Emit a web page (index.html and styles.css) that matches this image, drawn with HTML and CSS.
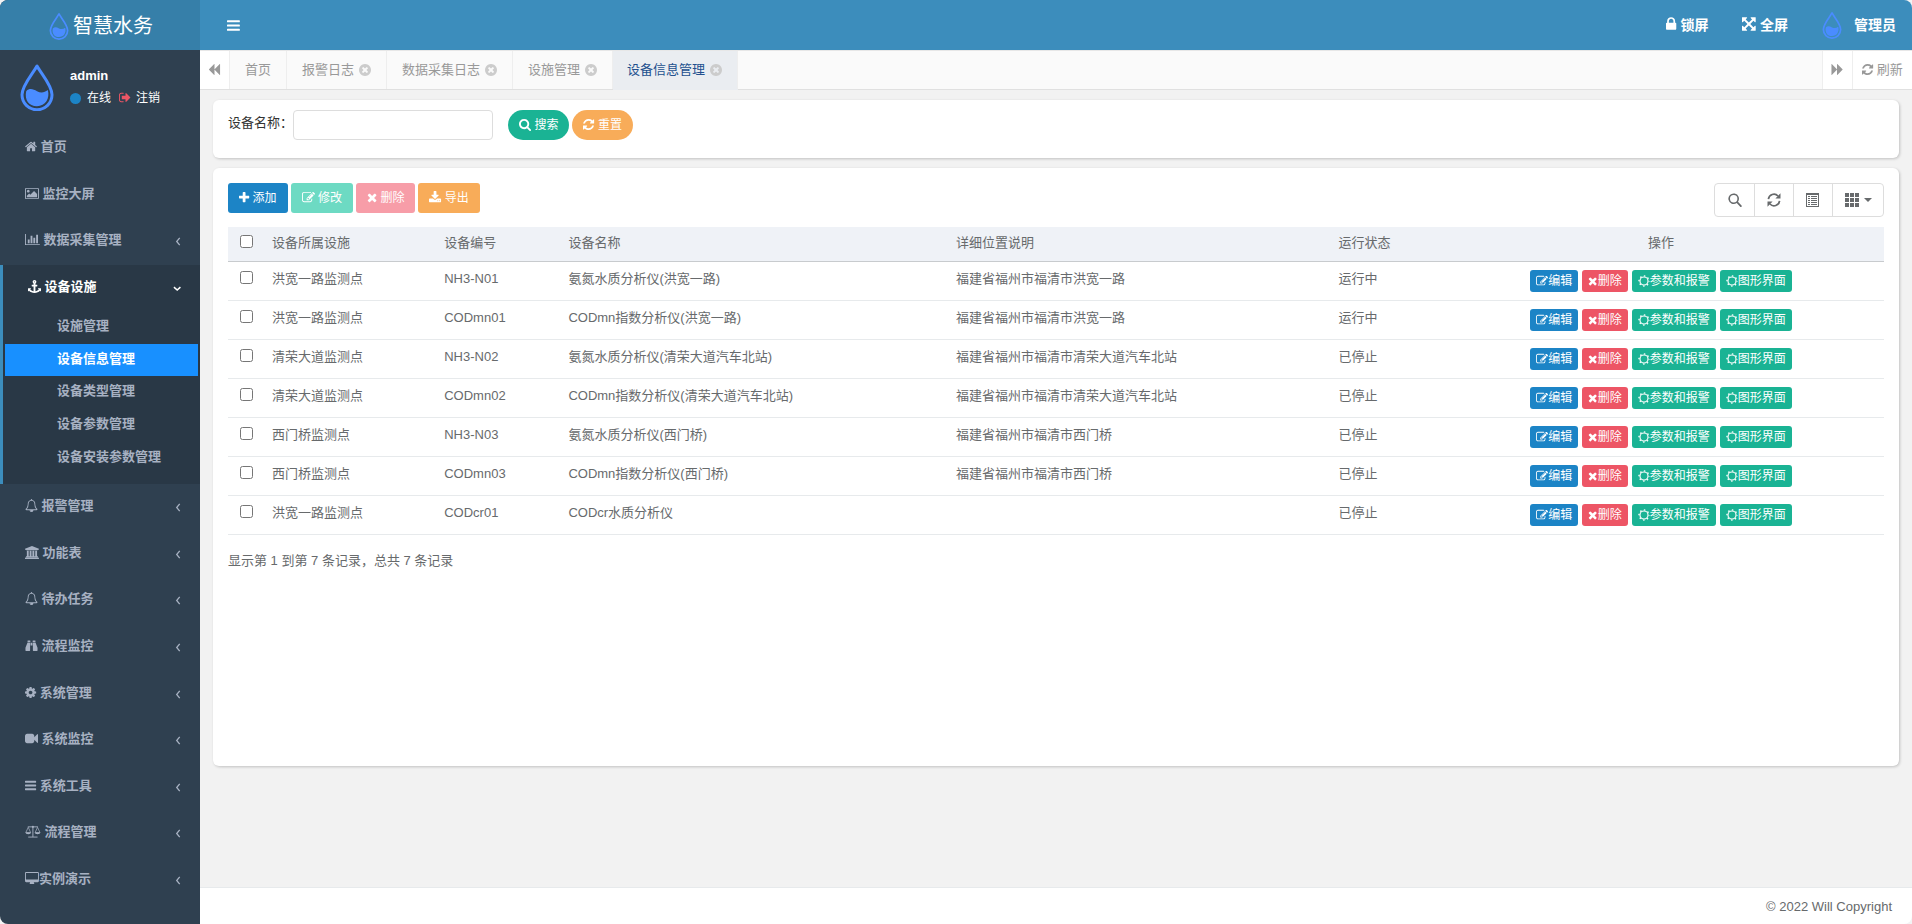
FILE: index.html
```html
<!DOCTYPE html>
<html lang="zh-CN">
<head>
<meta charset="utf-8">
<title>智慧水务</title>
<link rel="stylesheet" href="styles.css">
</head>
<body>
<svg class="sprite" aria-hidden="true">
<defs>
<g id="drop"><path d="M29 5C22 18 4 37 4 53a25 25 0 0 0 50 0C54 37 36 18 29 5z" fill="none" stroke="#4a8cff" stroke-width="5" stroke-linejoin="round"/><path d="M11 47c6-6 12-3 18 0s12 3 18-2c4 14-4 27-18 27S8 61 11 47z" fill="#4a8cff"/></g>
<path id="search" d="M1216 832q0-185-131.500-316.500t-316.500-131.500-316.500 131.500-131.500 316.500 131.500 316.500 316.500 131.500 316.500-131.500 131.500-316.500zm512 832q0 52-38 90t-90 38q-54 0-90-38l-343-342q-179 124-399 124-143 0-273.500-55.500t-225-150-150-225-55.500-273.500 55.500-273.500 150-225 225-150 273.500-55.500 273.500 55.500 225 150 150 225 55.500 273.500q0 220-124 399l343 343q37 37 37 90z"/>
<path id="refresh" d="M1639 1056q0 5-1 7-64 268-268 434.500t-478 166.500q-146 0-282.500-55t-243.500-157l-129 129q-19 19-45 19t-45-19-19-45v-448q0-26 19-45t45-19h448q26 0 45 19t19 45-19 45l-137 137q71 66 161 102t187 36q134 0 250-65t186-179q11-17 53-117 8-23 30-23h192q13 0 22.500 9.500t9.500 22.500zm25-800v448q0 26-19 45t-45 19h-448q-26 0-45-19t-19-45 19-45l138-138q-148-137-349-137-134 0-250 65t-186 179q-11 17-53 117-8 23-30 23h-199q-13 0-22.500-9.500t-9.500-22.500v-7q65-268 270-434.500t480-166.500q146 0 284 55.500t245 156.500l130-129q19-19 45-19t45 19 19 45z"/>
<path id="plus" d="M1600 736v192q0 40-28 68t-68 28h-416v416q0 40-28 68t-68 28h-192q-40 0-68-28t-28-68v-416h-416q-40 0-68-28t-28-68v-192q0-40 28-68t68-28h416v-416q0-40 28-68t68-28h192q40 0 68 28t28 68v416h416q40 0 68 28t28 68z"/>
<path id="times" d="M1490 1322q0 40-28 68l-136 136q-28 28-68 28t-68-28l-294-294-294 294q-28 28-68 28t-68-28l-136-136q-28-28-28-68t28-68l294-294-294-294q-28-28-28-68t28-68l136-136q28-28 68-28t68 28l294 294 294-294q28-28 68-28t68 28l136 136q28 28 28 68t-28 68l-294 294 294 294q28 28 28 68z"/>
<path id="edit" d="M888 1184l116-116-152-152-116 116v56h96v96h56zm440-720q-16-16-33 1l-350 350q-17 17-1 33t33-1l350-350q17-17 1-33zm80 594v190q0 119-84.500 203.500t-203.500 84.500h-832q-119 0-203.500-84.500t-84.500-203.500v-832q0-119 84.500-203.500t203.500-84.500h832q63 0 117 25 15 7 18 23 3 17-9 29l-49 49q-14 14-32 8-23-6-45-6h-832q-66 0-113 47t-47 113v832q0 66 47 113t113 47h832q66 0 113-47t47-113v-126q0-13 9-22l64-64q15-15 35-7t20 29zm-96-738l288 288-672 672h-288v-288zm444 132l-92 92-288-288 92-92q28-28 68-28t68 28l152 152q28 28 28 68t-28 68z"/>
<path id="download" d="M1344 1344q0-26-19-45t-45-19-45 19-19 45 19 45 45 19 45-19 19-45zm256 0q0-26-19-45t-45-19-45 19-19 45 19 45 45 19 45-19 19-45zm128-224v320q0 40-28 68t-68 28h-1472q-40 0-68-28t-28-68v-320q0-40 28-68t68-28h465l135 136q58 56 136 56t136-56l136-136h464q40 0 68 28t28 68zm-325-569q17 41-14 70l-448 448q-18 19-45 19t-45-19l-448-448q-31-29-14-70 17-39 59-39h256v-448q0-26 19-45t45-19h256q26 0 45 19t19 45v448h256q42 0 59 39z"/>
<path id="close" d="M1277 1122q0-26-19-45l-181-181 181-181q19-19 19-45 0-27-19-46l-90-90q-19-19-46-19-26 0-45 19l-181 181-181-181q-19-19-45-19-27 0-46 19l-90 90q-19 19-19 46 0 26 19 45l181 181-181 181q-19 19-19 45 0 27 19 46l90 90q19 19 46 19 26 0 45-19l181-181 181 181q19 19 45 19 27 0 46-19l90-90q19-19 19-46zm387-226q0 209-103 385.500t-279.500 279.500-385.500 103-385.500-103-279.500-279.500-103-385.500 103-385.500 279.500-279.500 385.500-103 385.500 103 279.500 279.500 103 385.500z"/>
<path id="lock" d="M640 768h512v-192q0-106-75-181t-181-75-181 75-75 181v192zm832 96v576q0 40-28 68t-68 28h-960q-40 0-68-28t-28-68v-576q0-40 28-68t68-28h32v-192q0-184 132-316t316-132 316 132 132 316v192h32q40 0 68 28t28 68z"/>
<path id="expand" d="M1411 541l-355 355 355 355 144-144q29-31 70-14 39 17 39 59v448q0 26-19 45t-45 19h-448q-42 0-59-40-17-39 14-69l144-144-355-355-355 355 144 144q31 30 14 69-17 40-59 40h-448q-26 0-45-19t-19-45v-448q0-42 40-59 39-17 69 14l144 144 355-355-355-355-144 144q-19 19-45 19-12 0-24-5-40-17-40-59v-448q0-26 19-45t45-19h448q42 0 59 40 17 39-14 69l-144 144 355 355 355-355-144-144q-31-30-14-69 17-40 59-40h448q26 0 45 19t19 45v448q0 42-39 59-13 5-25 5-26 0-45-19z"/>
<path id="bars" d="M192 1280h1408q64 0 64 64v128q0 64-64 64h-1408q-64 0-64-64v-128q0-64 64-64zM192 768h1408q64 0 64 64v128q0 64-64 64h-1408q-64 0-64-64v-128q0-64 64-64zM192 256h1408q64 0 64 64v128q0 64-64 64h-1408q-64 0-64-64v-128q0-64 64-64z"/>
<path id="home" d="M1472 992v480q0 26-19 45t-45 19h-384v-384h-256v384h-384q-26 0-45-19t-19-45v-480q0-1 1-6l575-474 575 474q1 2 1 6zm223-69l-62 74q-8 9-21 11h-3q-13 0-21-7l-692-577-692 577q-12 8-24 7-13-2-21-11l-62-74q-8-10-7-23.500t11-21.500l719-599q32-26 76-26t76 26l244 204v-195q0-14 9-23t23-9h192q14 0 23 9t9 23v408l219 182q10 8 11 21.500t-7 23.500z"/>
<path id="image" d="M576 576q0 80-56 136t-136 56-136-56-56-136 56-136 136-56 136 56 56 136zm1024 384v448h-1408v-192l320-320 160 160 512-512zm96-704h-1600q-13 0-22.500 9.500t-9.500 22.500v1216q0 13 9.500 22.500t22.500 9.500h1600q13 0 22.500-9.500t9.500-22.500v-1216q0-13-9.500-22.500t-22.500-9.500zm160 32v1216q0 66-47 113t-113 47h-1600q-66 0-113-47t-47-113v-1216q0-66 47-113t113-47h1600q66 0 113 47t47 113z"/>
<path id="chart" d="M640 896v512h-256v-512h256zm384-512v1024h-256v-1024h256zm1024 1152v128h-2048v-1536h128v1408h1920zm-640-896v768h-256v-768h256zm384-384v1152h-256v-1152h256z"/>
<path id="bell" d="M912 1696q0-16-16-16-59 0-101.500-42.500t-42.500-101.500q0-16-16-16t-16 16q0 73 51.500 124.500t124.500 51.500q16 0 16-16zm-666-288h1300q-266-300-266-832 0-51-24-105t-69-103-121.500-80.500-169.500-31.500-169.500 31.500-121.500 80.500-69 103-24 105q0 532-266 832zm1482 0q0 52-38 90t-90 38h-448q0 106-75 181t-181 75-181-75-75-181h-448q-52 0-90-38t-38-90q50-42 91-88t85-119.500 74.500-158.500 50-206 19.500-260q0-152 117-282.500t307-158.500q-8-19-8-39 0-40 28-68t68-28 68 28 28 68q0 20-8 39 190 28 307 158.500t117 282.500q0 139 19.500 260t50 206 74.500 158.500 85 119.500 91 88z"/>
<path id="bank" d="M960 0l960 384v128h-128q0 26-20.500 45t-48.500 19h-1526q-28 0-48.500-19t-20.500-45h-128v-128zm-704 640h256v768h128v-768h256v768h128v-768h256v768h128v-768h256v768h59q28 0 48.500 19t20.500 45v64h-1664v-64q0-26 20.500-45t48.500-19h59v-768zm1595 960q28 0 48.500 19t20.500 45v128h-1920v-128q0-26 20.500-45t48.500-19h1782z"/>
<path id="binoculars" d="M704 832v768q0 64-64 64h-512q-64 0-64-64v-384l270-704h306q64 0 64 64zM1024 512v384h-256v-384zM1728 1216v384q0 64-64 64h-512q-64 0-64-64v-1024q0-64 64-64h306zM736 224v224h-384v-224q0-32 32-32h320q32 0 32 32zM1440 224v224h-384v-224q0-32 32-32h320q32 0 32 32z"/>
<path id="cog" d="M1152 896q0-106-75-181t-181-75-181 75-75 181 75 181 181 75 181-75 75-181zm512-109v222q0 12-8 23t-20 13l-185 28q-19 54-39 91 35 50 107 138 10 12 10 25t-9 23q-27 37-99 108t-94 71q-12 0-26-9l-138-108q-44 23-91 38-16 136-29 186-7 28-36 28h-222q-14 0-24.500-8.500t-11.500-21.500l-28-184q-49-16-90-37l-141 107q-10 9-25 9-14 0-25-11-126-114-165-168-7-10-7-23 0-12 8-23 15-21 51-66.500t54-70.500q-27-50-41-99l-183-27q-13-2-21-12.500t-8-23.500v-222q0-12 8-23t19-13l186-28q14-46 39-92-40-57-107-138-10-12-10-24 0-10 9-23 26-36 98.500-107.500t94.500-71.500q13 0 26 10l138 107q44-23 91-38 16-136 29-186 7-28 36-28h222q14 0 24.500 8.500t11.500 21.500l28 184q49 16 90 37l142-107q9-9 24-9 13 0 25 10 129 119 165 170 7 8 7 22 0 12-8 23-15 21-51 66.500t-54 70.500q26 50 41 98l183 28q13 2 21 12.500t8 23.500z"/>
<path id="video" d="M1792 352v1088q0 42-39 59-13 5-25 5-27 0-45-19l-403-403v166q0 119-84.500 203.500t-203.500 84.500h-704q-119 0-203.500-84.500t-84.500-203.500v-704q0-119 84.500-203.500t203.500-84.500h704q119 0 203.500 84.500t84.500 203.500v165l403-402q18-19 45-19 12 0 25 5 39 17 39 59z"/>
<g id="scale"><path d="M1088 256v1408M448 1664h1280M384 256h1408" fill="none" stroke="currentColor" stroke-width="128"/><circle cx="1088" cy="256" r="144"/><path d="M448 320L112 1040h672L448 320zM1728 320l-336 720h672L1728 320z" fill="none" stroke="currentColor" stroke-width="100"/><path d="M48 1040h800q-40 240-400 240t-400-240zM1328 1040h800q-40 240-400 240t-400-240z"/></g>
<path id="desktop" d="M1728 992v-832q0-13-9.500-22.500t-22.500-9.500h-1600q-13 0-22.500 9.500t-9.500 22.500v832q0 13 9.500 22.500t22.500 9.500h1600q13 0 22.500-9.500t9.500-22.500zm128-832v1088q0 66-47 113t-113 47h-544q0 37 16 77.500t32 71 16 43.500q0 26-19 45t-45 19h-512q-26 0-45-19t-19-45q0-14 16-44t32-70 16-78h-544q-66 0-113-47t-47-113v-1088q0-66 47-113t113-47h1600q66 0 113 47t47 113z"/>
<path id="anchor" d="M960 256q0-26-19-45t-45-19-45 19-19 45 19 45 45 19 45-19 19-45zm832 928v352q0 22-20 30-8 2-12 2-12 0-23-9l-93-93q-119 143-318.500 226.500t-429.500 83.500-429.500-83.500-318.500-226.500l-93 93q-9 9-23 9-4 0-12-2-20-8-20-30v-352q0-14 9-23t23-9h352q22 0 30 20 8 19-7 35l-100 100q67 91 189.500 153.500t271.500 82.500v-647h-192q-26 0-45-19t-19-45v-128q0-26 19-45t45-19h192v-163q-58-34-93-92.500t-35-128.500q0-106 75-181t181-75 181 75 75 181q0 70-35 128.500t-93 92.500v163h192q26 0 45 19t19 45v128q0 26-19 45t-45 19h-192v647q149-20 271.500-82.500t189.500-153.500l-100-100q-15-16-7-35 8-20 30-20h352q14 0 23 9t9 23z"/>
<path id="signout" d="M704 1440q0 4 1 20t0 27-3 23-10 20-20 6h-320q-119 0-203.500-84.500t-84.500-203.500v-704q0-119 84.500-203.500t203.500-84.500h320q13 0 22.500 9.500t9.500 22.500q0 4 1 20t0 27-3 23-10 20-20 6h-320q-66 0-113 47t-47 113v704q0 66 47 113t113 47h312q40 0 40 32zm928-544q0 26-19 45l-544 544q-19 19-45 19t-45-19-19-45v-288h-448q-26 0-45-19t-19-45v-384q0-26 19-45t45-19h448v-288q0-26 19-45t45-19 45 19l544 544q19 19 19 45z"/>
<path id="backward" d="M1664 160v1472q0 50-45 19l-709-709q-10-10-14-20v710q0 50-45 19l-710-710q-38-45 0-90l710-710q45-31 45 19v710q4-10 14-20l709-709q45-31 45 19z"/>
<path id="forward" d="M128 160v1472q0 50 45 19l709-709q10-10 14-20v710q0 50 45 19l710-710q38-45 0-90l-710-710q-45-31-45 19v710q-4-10-14-20l-709-709q-45-31-45 19z"/>
<path id="left" d="M512 384L96 896l416 512" fill="none" stroke="currentColor" stroke-width="180"/>
<path id="down" d="M128 704l448 416 448-416" fill="none" stroke="currentColor" stroke-width="200"/>
<g id="sun" fill="none" stroke="currentColor"><circle cx="896" cy="896" r="600" stroke-width="170"/><circle cx="896" cy="896" r="750" stroke-width="190" stroke-dasharray="220 369" stroke-dashoffset="110"/></g>
<path id="zoom" d="M10 8.800a5.300 5.300 0 1 0-1.300 1.300l3.500 3.600a.9.900 0 0 0 1.300-1.300zM5.700 9.400a3.700 3.700 0 1 1 0-7.400 3.700 3.700 0 0 1 0 7.400z"/>
<g id="reload"><path d="M1.400 6.200A5.600 5.600 0 0 1 11 3M12.600 7.800A5.600 5.600 0 0 1 3 11" fill="none" stroke="currentColor" stroke-width="1.700"/><path d="M13.500.3V5.400H8.400zM.5 13.700V8.600h5.100z"/></g>
<path id="list" fill-rule="evenodd" d="M0 0h13v14H0zM1 2v11h11V2zM2 3h2v1H2zM5 3h6v1H5zM2 5h2v1H2zM5 5h6v1H5zM2 7h2v1H2zM5 7h6v1H5zM2 9h2v1H2zM5 9h6v1H5zM2 11h2v1H2zM5 11h6v1H5z"/>
<path id="grid" d="M0 0h4v4H0zM5 0h4v4H5zM10 0h4v4h-4zM0 5h4v4H0zM5 5h4v4H5zM10 5h4v4h-4zM0 10h4v4H0zM5 10h4v4H5zM10 10h4v4h-4z"/>
</defs>
</svg>
<div class="app">
  <aside class="sidebar">
    <a class="logo" href="#"><svg class="drop" viewBox="0 0 58 80"><use href="#drop"/></svg><span>智慧水务</span></a>
    <div class="user">
      <svg class="drop drop-lg" viewBox="0 0 58 80"><use href="#drop"/></svg>
      <div>
        <p class="user-name">admin</p>
        <p class="user-links"><i class="dot"></i><a href="#">在线</a><a href="#"><svg class="fa danger" viewBox="64 0 1664 1792"><use href="#signout"/></svg>注销</a></p>
      </div>
    </div>
    <nav>
      <ul class="menu">
        <li><a href="#"><svg class="fa" viewBox="64 0 1664 1792"><use href="#home"/></svg> 首页</a></li>
        <li><a href="#"><svg class="fa" viewBox="-64 0 1920 1792"><use href="#image"/></svg> 监控大屏</a></li>
        <li><a href="#"><svg class="fa" viewBox="0 0 2048 1792"><use href="#chart"/></svg> 数据采集管理<svg class="fa arrow" viewBox="0 0 640 1792"><use href="#left"/></svg></a></li>
        <li class="active"><a href="#"><svg class="fa" viewBox="0 0 1792 1792"><use href="#anchor"/></svg> 设备设施<svg class="fa arrow" viewBox="0 0 1152 1792"><use href="#down"/></svg></a>
          <ul class="submenu">
            <li><a href="#">设施管理</a></li>
            <li><a class="current" href="#">设备信息管理</a></li>
            <li><a href="#">设备类型管理</a></li>
            <li><a href="#">设备参数管理</a></li>
            <li><a href="#">设备安装参数管理</a></li>
          </ul>
        </li>
        <li><a href="#"><svg class="fa" viewBox="0 0 1792 1792"><use href="#bell"/></svg> 报警管理<svg class="fa arrow" viewBox="0 0 640 1792"><use href="#left"/></svg></a></li>
        <li><a href="#"><svg class="fa" viewBox="0 0 1920 1792"><use href="#bank"/></svg> 功能表<svg class="fa arrow" viewBox="0 0 640 1792"><use href="#left"/></svg></a></li>
        <li><a href="#"><svg class="fa" viewBox="0 0 1792 1792"><use href="#bell"/></svg> 待办任务<svg class="fa arrow" viewBox="0 0 640 1792"><use href="#left"/></svg></a></li>
        <li><a href="#"><svg class="fa" viewBox="0 0 1792 1792"><use href="#binoculars"/></svg> 流程监控<svg class="fa arrow" viewBox="0 0 640 1792"><use href="#left"/></svg></a></li>
        <li><a href="#"><svg class="fa" viewBox="128 0 1536 1792"><use href="#cog"/></svg> 系统管理<svg class="fa arrow" viewBox="0 0 640 1792"><use href="#left"/></svg></a></li>
        <li><a href="#"><svg class="fa" viewBox="0 0 1792 1792"><use href="#video"/></svg> 系统监控<svg class="fa arrow" viewBox="0 0 640 1792"><use href="#left"/></svg></a></li>
        <li><a href="#"><svg class="fa" viewBox="128 0 1536 1792"><use href="#bars"/></svg> 系统工具<svg class="fa arrow" viewBox="0 0 640 1792"><use href="#left"/></svg></a></li>
        <li><a href="#"><svg class="fa" viewBox="0 0 2176 1792"><use href="#scale"/></svg> 流程管理<svg class="fa arrow" viewBox="0 0 640 1792"><use href="#left"/></svg></a></li>
        <li><a href="#"><svg class="fa" viewBox="-64 0 1920 1792"><use href="#desktop"/></svg>实例演示<svg class="fa arrow" viewBox="0 0 640 1792"><use href="#left"/></svg></a></li>
      </ul>
    </nav>
  </aside>
  <div class="main">
    <header class="topbar">
      <button class="toggle" type="button" aria-label="菜单"><svg class="fa" viewBox="128 0 1536 1792"><use href="#bars"/></svg></button>
      <div class="top-links">
        <a href="#"><svg class="fa" viewBox="320 0 1152 1792"><use href="#lock"/></svg> 锁屏</a>
        <a href="#"><svg class="fa" viewBox="128 0 1536 1792"><use href="#expand"/></svg> 全屏</a>
        <a class="account" href="#"><svg class="drop" viewBox="0 0 58 80"><use href="#drop"/></svg>管理员</a>
      </div>
    </header>
    <div class="tabs">
      <button class="tab-btn" type="button" aria-label="向左"><svg class="fa" viewBox="0 0 1664 1792"><use href="#backward"/></svg></button>
      <div class="tab-list">
        <a href="#">首页</a>
        <a href="#">报警日志<svg class="fa" viewBox="128 0 1536 1792"><use href="#close"/></svg></a>
        <a href="#">数据采集日志<svg class="fa" viewBox="128 0 1536 1792"><use href="#close"/></svg></a>
        <a href="#">设施管理<svg class="fa" viewBox="128 0 1536 1792"><use href="#close"/></svg></a>
        <a class="current" href="#">设备信息管理<svg class="fa" viewBox="128 0 1536 1792"><use href="#close"/></svg></a>
      </div>
      <button class="tab-btn tab-next" type="button" aria-label="向右"><svg class="fa" viewBox="64 0 1664 1792"><use href="#forward"/></svg></button>
      <button class="tab-btn tab-refresh" type="button"><svg class="fa" viewBox="128 0 1536 1792"><use href="#refresh"/></svg> 刷新</button>
    </div>
    <main class="content">
      <form class="panel search-panel">
        <label for="device-name">设备名称：</label>
        <input id="device-name" class="field" type="text">
        <button class="btn round green" type="button"><svg class="fa" viewBox="64 0 1664 1792"><use href="#search"/></svg> 搜索</button>
        <button class="btn round orange" type="button"><svg class="fa" viewBox="128 0 1536 1792"><use href="#refresh"/></svg> 重置</button>
      </form>
      <section class="panel list-panel">
        <div class="toolbar">
          <div class="actions">
            <button class="btn blue" type="button"><svg class="fa" viewBox="192 0 1408 1792"><use href="#plus"/></svg> 添加</button>
            <button class="btn green" type="button" disabled><svg class="fa" viewBox="0 0 1792 1792"><use href="#edit"/></svg> 修改</button>
            <button class="btn red" type="button" disabled><svg class="fa" viewBox="192 0 1408 1792"><use href="#times"/></svg> 删除</button>
            <button class="btn orange" type="button"><svg class="fa" viewBox="64 0 1664 1792"><use href="#download"/></svg> 导出</button>
          </div>
          <div class="tools">
            <button type="button" aria-label="搜索"><svg class="glyph" viewBox="0 0 14 14"><use href="#zoom"/></svg></button>
            <button type="button" aria-label="刷新"><svg class="glyph" viewBox="0 0 14 14"><use href="#reload"/></svg></button>
            <button type="button" aria-label="视图"><svg class="glyph" viewBox="0 0 14 14"><use href="#list"/></svg></button>
            <button type="button" aria-label="列"><svg class="glyph" viewBox="0 0 14 14"><use href="#grid"/></svg><i class="caret"></i></button>
          </div>
        </div>
        <table class="grid">
          <colgroup><col class="c-check"><col class="c-site"><col class="c-code"><col class="c-name"><col class="c-place"><col class="c-state"><col class="c-ops"></colgroup>
          <thead>
            <tr><th><input type="checkbox" aria-label="全选"></th><th>设备所属设施</th><th>设备编号</th><th>设备名称</th><th>详细位置说明</th><th>运行状态</th><th class="center">操作</th></tr>
          </thead>
          <tbody>
            <tr><td><input type="checkbox" aria-label="选择"></td><td>洪宽一路监测点</td><td>NH3-N01</td><td>氨氮水质分析仪(洪宽一路)</td><td>福建省福州市福清市洪宽一路</td><td>运行中</td><td><div class="ops"><a class="xs blue" href="#"><svg class="fa" viewBox="0 0 1792 1792"><use href="#edit"/></svg>编辑</a><a class="xs red" href="#"><svg class="fa" viewBox="192 0 1408 1792"><use href="#times"/></svg>删除</a><a class="xs green" href="#"><svg class="fa" viewBox="0 0 1792 1792"><use href="#sun"/></svg>参数和报警</a><a class="xs green" href="#"><svg class="fa" viewBox="0 0 1792 1792"><use href="#sun"/></svg>图形界面</a></div></td></tr>
            <tr><td><input type="checkbox" aria-label="选择"></td><td>洪宽一路监测点</td><td>CODmn01</td><td>CODmn指数分析仪(洪宽一路)</td><td>福建省福州市福清市洪宽一路</td><td>运行中</td><td><div class="ops"><a class="xs blue" href="#"><svg class="fa" viewBox="0 0 1792 1792"><use href="#edit"/></svg>编辑</a><a class="xs red" href="#"><svg class="fa" viewBox="192 0 1408 1792"><use href="#times"/></svg>删除</a><a class="xs green" href="#"><svg class="fa" viewBox="0 0 1792 1792"><use href="#sun"/></svg>参数和报警</a><a class="xs green" href="#"><svg class="fa" viewBox="0 0 1792 1792"><use href="#sun"/></svg>图形界面</a></div></td></tr>
            <tr><td><input type="checkbox" aria-label="选择"></td><td>清荣大道监测点</td><td>NH3-N02</td><td>氨氮水质分析仪(清荣大道汽车北站)</td><td>福建省福州市福清市清荣大道汽车北站</td><td>已停止</td><td><div class="ops"><a class="xs blue" href="#"><svg class="fa" viewBox="0 0 1792 1792"><use href="#edit"/></svg>编辑</a><a class="xs red" href="#"><svg class="fa" viewBox="192 0 1408 1792"><use href="#times"/></svg>删除</a><a class="xs green" href="#"><svg class="fa" viewBox="0 0 1792 1792"><use href="#sun"/></svg>参数和报警</a><a class="xs green" href="#"><svg class="fa" viewBox="0 0 1792 1792"><use href="#sun"/></svg>图形界面</a></div></td></tr>
            <tr><td><input type="checkbox" aria-label="选择"></td><td>清荣大道监测点</td><td>CODmn02</td><td>CODmn指数分析仪(清荣大道汽车北站)</td><td>福建省福州市福清市清荣大道汽车北站</td><td>已停止</td><td><div class="ops"><a class="xs blue" href="#"><svg class="fa" viewBox="0 0 1792 1792"><use href="#edit"/></svg>编辑</a><a class="xs red" href="#"><svg class="fa" viewBox="192 0 1408 1792"><use href="#times"/></svg>删除</a><a class="xs green" href="#"><svg class="fa" viewBox="0 0 1792 1792"><use href="#sun"/></svg>参数和报警</a><a class="xs green" href="#"><svg class="fa" viewBox="0 0 1792 1792"><use href="#sun"/></svg>图形界面</a></div></td></tr>
            <tr><td><input type="checkbox" aria-label="选择"></td><td>西门桥监测点</td><td>NH3-N03</td><td>氨氮水质分析仪(西门桥)</td><td>福建省福州市福清市西门桥</td><td>已停止</td><td><div class="ops"><a class="xs blue" href="#"><svg class="fa" viewBox="0 0 1792 1792"><use href="#edit"/></svg>编辑</a><a class="xs red" href="#"><svg class="fa" viewBox="192 0 1408 1792"><use href="#times"/></svg>删除</a><a class="xs green" href="#"><svg class="fa" viewBox="0 0 1792 1792"><use href="#sun"/></svg>参数和报警</a><a class="xs green" href="#"><svg class="fa" viewBox="0 0 1792 1792"><use href="#sun"/></svg>图形界面</a></div></td></tr>
            <tr><td><input type="checkbox" aria-label="选择"></td><td>西门桥监测点</td><td>CODmn03</td><td>CODmn指数分析仪(西门桥)</td><td>福建省福州市福清市西门桥</td><td>已停止</td><td><div class="ops"><a class="xs blue" href="#"><svg class="fa" viewBox="0 0 1792 1792"><use href="#edit"/></svg>编辑</a><a class="xs red" href="#"><svg class="fa" viewBox="192 0 1408 1792"><use href="#times"/></svg>删除</a><a class="xs green" href="#"><svg class="fa" viewBox="0 0 1792 1792"><use href="#sun"/></svg>参数和报警</a><a class="xs green" href="#"><svg class="fa" viewBox="0 0 1792 1792"><use href="#sun"/></svg>图形界面</a></div></td></tr>
            <tr><td><input type="checkbox" aria-label="选择"></td><td>洪宽一路监测点</td><td>CODcr01</td><td>CODcr水质分析仪</td><td></td><td>已停止</td><td><div class="ops"><a class="xs blue" href="#"><svg class="fa" viewBox="0 0 1792 1792"><use href="#edit"/></svg>编辑</a><a class="xs red" href="#"><svg class="fa" viewBox="192 0 1408 1792"><use href="#times"/></svg>删除</a><a class="xs green" href="#"><svg class="fa" viewBox="0 0 1792 1792"><use href="#sun"/></svg>参数和报警</a><a class="xs green" href="#"><svg class="fa" viewBox="0 0 1792 1792"><use href="#sun"/></svg>图形界面</a></div></td></tr>
          </tbody>
        </table>
        <p class="summary">显示第 1 到第 7 条记录，总共 7 条记录</p>
      </section>
    </main>
    <footer class="footer">© 2022 Will Copyright</footer>
  </div>
</div>
</body>
</html>
```

FILE: styles.css
```css
* { box-sizing: border-box; }
body { margin: 0; background: #f3f3f4; color: #676a6c; font: 13px/1.43 "Liberation Sans", "Noto Sans CJK SC", sans-serif; }
a { color: inherit; text-decoration: none; }
ul { list-style: none; margin: 0; padding: 0; }
p { margin: 0; }
button, input { font: inherit; color: inherit; }
button { cursor: pointer; }
.sprite { position: absolute; width: 0; height: 0; }
.fa { height: 1em; width: auto; fill: currentColor; vertical-align: -2px; overflow: visible; }
.drop { width: 20px; height: 28px; }
.drop-lg { width: 36px; height: 48px; }

.app { display: flex; min-height: 100vh; border-radius: 8px; overflow: hidden; }
.main { flex: 1; min-width: 0; display: flex; flex-direction: column; }

.sidebar { flex: 0 0 200px; background: #2f4050; color: #a7b1c2; }
.logo { height: 50px; display: flex; align-items: center; justify-content: center; gap: 4px; padding: 2px 0 0 2px; background: #367fa9; color: #fff; font-size: 20px; line-height: 28px; }
.user { height: 75px; display: flex; gap: 15px; padding: 13px 19px 0; color: #fff; }
.user-name { font-weight: 700; padding-top: 4px; }
.user-links { display: flex; align-items: center; font-size: 12px; margin-top: 4px; }
.dot { width: 11px; height: 11px; border-radius: 50%; background: #1c84c6; margin-right: 6px; }
.user-links a + a { margin-left: 8px; }
.user-links .fa { font-size: 13px; }
.danger { color: #ed5565; margin-right: 5px; }
.menu { font-weight: 600; }
.menu > li > a { display: block; padding: 13px 19px 15px 25px; }
.menu .arrow { float: right; margin-top: 4px; }
.menu > .active { border-left: 3px solid #3c8dbc; background: #293846; padding-bottom: 10px; }
.menu > .active > a { color: #fff; }
.submenu a { display: block; margin: 0 2px; padding: 6px 10px 8px 52px; }
.submenu .current { background: #1890ff; color: #fff; }

.topbar { height: 50px; background: #3c8dbc; color: #fff; display: flex; align-items: center; justify-content: space-between; padding: 0 16px 0 27px; }
.toggle { border: 0; padding: 2px 0 0; background: none; font-size: 15px; }
.top-links { display: flex; align-items: center; gap: 34px; font-size: 14px; font-weight: 700; }
.top-links .fa { font-size: 16px; }
.account { display: flex; align-items: center; gap: 12px; }

.tabs { height: 40px; display: flex; background: #fafafa; border-top: 1px solid #e7e7e7; border-bottom: 1px solid #e0e0e0; color: #999; }
.tab-btn { flex: none; width: 30px; border: 0; border-right: 1px solid #eee; background: #fff; padding: 0; }
.tab-next, .tab-refresh { border-right: 0; border-left: 1px solid #eee; }
.tab-refresh { width: 60px; }
.tab-list { flex: 1; display: flex; line-height: 38px; }
.tab-list a { display: flex; align-items: center; gap: 5px; height: 38px; padding: 0 15px; border-right: 1px solid #eee; }
.tab-list .fa { color: #ccc; font-size: 14px; }
.tab-list .current { background: #eaedf1; color: #23508e; box-shadow: 0 1px #eaedf1; padding-left: 14px; }

.content { flex: 1; padding: 10px 13px; background: #f2f2f2; }
.panel { background: #fff; border-radius: 6px; box-shadow: 1px 1px 3px rgba(0, 0, 0, .2); padding: 0 15px; }
.search-panel { display: flex; align-items: flex-start; height: 58px; padding-top: 10px; margin-bottom: 10px; color: #333; }
.search-panel label { line-height: 26px; }
.field { width: 200px; height: 30px; border: 1px solid #ddd; border-radius: 4px; background: #fff; margin-right: 15px; padding: 0 8px; }
.btn { height: 30px; border: 0; border-radius: 3px; padding: 1px 11px 0; font-size: 12px; color: #fff; white-space: nowrap; }
.btn .fa { font-size: 13px; }
.round { border-radius: 15px; }
.round + .round { margin-left: 3px; }
.blue { background: #1c84c6; }
.green { background: #1ab394; }
.red { background: #ed5565; }
.orange { background: #f8ac59; }
.green:disabled { background: #6ddac3; }
.red:disabled { background: #f79da8; }

.list-panel { min-height: calc(100vh - 326px); padding-top: 15px; }
.toolbar { display: flex; justify-content: space-between; align-items: flex-start; margin-bottom: 10px; }
.actions { display: flex; gap: 3px; }
.tools { display: flex; border: 1px solid #ddd; border-radius: 4px; }
.tools button { height: 32px; width: 39px; display: flex; align-items: center; justify-content: center; gap: 5px; background: none; border: 0; border-left: 1px solid #ddd; padding: 0; }
.tools button:first-child { border-left: 0; }
.tools button:last-child { width: 51px; }
.glyph { width: 14px; height: 14px; fill: currentColor; }
.caret { border: 4px solid transparent; border-top-color: currentColor; border-bottom: 0; }

.grid { width: 100%; table-layout: fixed; border-collapse: separate; border-spacing: 0; line-height: 18px; }
.c-check { width: 36px; }
.c-site { width: 10.4%; }
.c-code { width: 7.5%; }
.c-name { width: 23.4%; }
.c-place { width: 23.1%; }
.c-state { width: 6.5%; }
.grid th { background: #eff2f7; font-weight: 400; text-align: left; padding: 7px 8px 9px; border-bottom: 1px solid #c8cbce; }
.grid td { vertical-align: top; padding: 8px; border-bottom: 1px solid #e7eaec; }
.grid th:first-child, .grid td:first-child { text-align: center; }
.grid input { display: block; width: 13px; height: 13px; margin: 1px auto 0; }
.grid th input { margin: 0 auto 3px; }
.grid .center { text-align: center; }
.ops { display: flex; justify-content: center; gap: 4px; }
.xs { height: 22px; line-height: 22px; padding: 0 6px; border-radius: 3px; color: #fff; font-size: 12px; white-space: nowrap; }
.summary { padding-top: 17px; }

.footer { height: 37px; line-height: 37px; padding: 0 20px; background: #fff; border-top: 1px solid #e7eaec; text-align: right; }
```
